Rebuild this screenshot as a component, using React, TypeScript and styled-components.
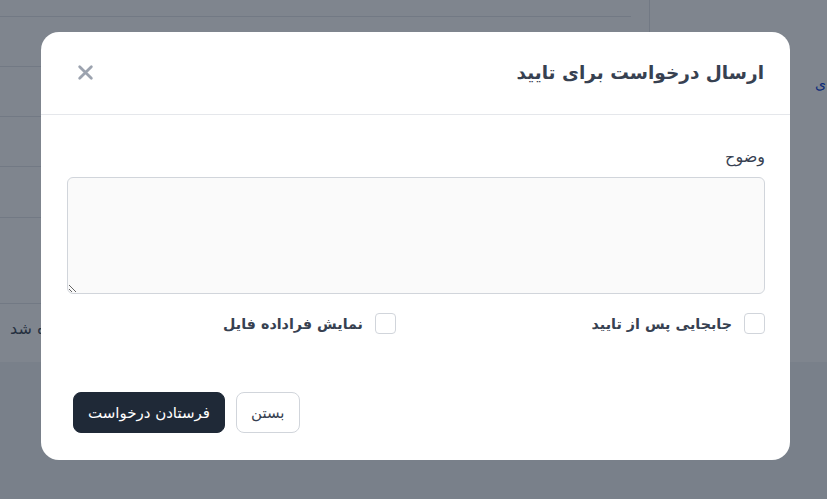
import React from "react";
import styled, { createGlobalStyle } from "styled-components";

const Global = createGlobalStyle`
  html, body { margin: 0; padding: 0; }
  body {
    width: 827px;
    height: 499px;
    overflow: hidden;
    font-family: "DejaVu Sans", "Noto Sans", sans-serif;
    background: #f3f4f6;
  }
  * { box-sizing: border-box; }
`;

const Page = styled.div`
  position: relative;
  width: 827px;
  height: 499px;
  overflow: hidden;
  background: #f3f4f6;
`;

const TopPanel = styled.div`
  height: 362px;
  background: #ffffff;
  display: grid;
  grid-template-columns: 649px 1px 1fr;
`;

const TableArea = styled.div`
  display: flex;
  flex-direction: column;
  padding-right: 18px;
`;

const Row = styled.div<{ $h: number }>`
  height: ${(p) => p.$h}px;
  border-bottom: 1px solid #e5e7eb;
  flex-shrink: 0;
`;

const StatusRow = styled.div`
  direction: rtl;
  height: 48px;
  display: flex;
  align-items: center;
  justify-content: flex-end;
  padding-left: 10px;
  font-size: 16px;
  color: #4b5563;
`;

const VLine = styled.div`
  background: #e5e7eb;
`;

const Side = styled.div`
  direction: rtl;
  padding-top: 76px;
  padding-right: 1px;
  font-size: 14px;
  color: #1d4ed8;
`;

const Overlay = styled.div`
  position: absolute;
  inset: 0;
  background: rgba(0, 12, 30, 0.5);
  display: flex;
  align-items: flex-start;
  padding: 32px 0 0 41px;
`;

const Modal = styled.div`
  direction: rtl;
  width: 749px;
  height: 428px;
  background: #ffffff;
  border-radius: 18px;
  display: flex;
  flex-direction: column;
  overflow: hidden;
`;

const Header = styled.div`
  height: 83px;
  border-bottom: 1px solid #e5e7eb;
  display: flex;
  align-items: center;
  justify-content: space-between;
  padding: 0 26px 2px 32px;
`;

const Title = styled.h3`
  margin: 0;
  font-size: 18.5px;
  font-weight: 700;
  color: #374151;
`;

const CloseButton = styled.button`
  width: 24px;
  height: 24px;
  padding: 0;
  border: none;
  background: transparent;
  display: flex;
  align-items: center;
  justify-content: center;
  color: #9ca3af;
  cursor: pointer;
`;

const Body = styled.div`
  flex: 1;
  display: flex;
  flex-direction: column;
  padding: 30px 25px 0 26px;
`;

const Label = styled.label`
  font-size: 16px;
  font-weight: 400;
  color: #374151;
  line-height: 24px;
  margin-bottom: 8px;
`;

const TextArea = styled.textarea`
  width: 100%;
  height: 117px;
  background: #fafafa;
  border: 1px solid #d1d5db;
  border-radius: 6px;
  resize: vertical;
  font-family: inherit;
  outline: none;
`;

const Options = styled.div`
  display: grid;
  grid-template-columns: 1fr 1fr;
  column-gap: 40px;
  margin-top: 19px;
`;

const Option = styled.label`
  display: flex;
  align-items: center;
  gap: 12px;
  font-size: 14.3px;
  font-weight: 700;
  color: #374151;
`;

const Box = styled.span`
  width: 21px;
  height: 21px;
  border: 1px solid #d1d5db;
  border-radius: 4px;
  background: #ffffff;
  flex-shrink: 0;
`;

const Footer = styled.div`
  margin-top: auto;
  display: flex;
  justify-content: flex-end;
  gap: 11px;
  padding: 0 0 27px 6px;
`;

const Button = styled.button<{ $primary?: boolean }>`
  height: 41px;
  padding: 0 14px;
  border-radius: 8px;
  font-family: inherit;
  font-size: 15px;
  font-weight: 400;
  border: 1px solid ${(p) => (p.$primary ? "#1f2937" : "#d1d5db")};
  background: ${(p) => (p.$primary ? "#1f2937" : "#ffffff")};
  color: ${(p) => (p.$primary ? "#ffffff" : "#374151")};
  cursor: pointer;
`;

export default function App() {
  return (
    <Page>
      <Global />
      <TopPanel>
        <TableArea>
          <Row $h={17} />
          <Row $h={50} />
          <Row $h={50} />
          <Row $h={50} />
          <Row $h={51} />
          <Row $h={86} />
          <StatusRow>ارسال شده شد</StatusRow>
        </TableArea>
        <VLine />
        <Side>ی</Side>
      </TopPanel>
      <Overlay>
        <Modal>
          <Header>
            <Title>ارسال درخواست برای تایید</Title>
            <CloseButton aria-label="close">
              <svg width="17" height="17" viewBox="0 0 16 16" fill="none">
                <path d="M2.5 2.5 L13.5 13.5 M13.5 2.5 L2.5 13.5" stroke="currentColor" strokeWidth="2.6" strokeLinecap="round" />
              </svg>
            </CloseButton>
          </Header>
          <Body>
            <Label>وضوح</Label>
            <TextArea />
            <Options>
              <Option>
                <Box />
                جابجایی پس از تایید
              </Option>
              <Option>
                <Box />
                نمایش فراداده فایل
              </Option>
            </Options>
            <Footer>
              <Button>بستن</Button>
              <Button $primary>فرستادن درخواست</Button>
            </Footer>
          </Body>
        </Modal>
      </Overlay>
    </Page>
  );
}
